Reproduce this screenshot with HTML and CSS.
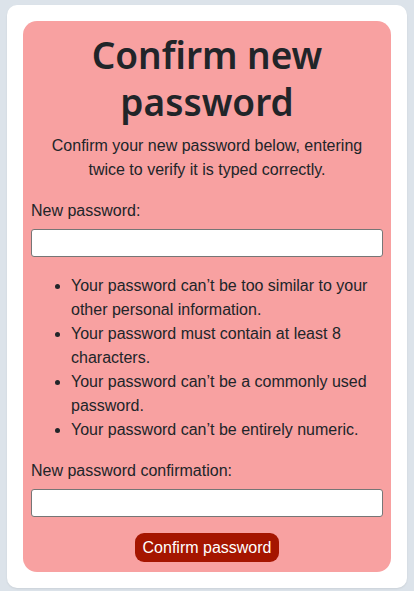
FILE: index.html
```html
<!DOCTYPE html>
<html lang="en">
<head>
<meta charset="utf-8">
<title>Confirm new password</title>
<link rel="stylesheet" href="styles.css">
</head>
<body>
<main class="card">
  <section class="panel">
    <h1 class="title">Confirm new password</h1>
    <p class="lead">Confirm your new password below, entering twice to verify it is typed correctly.</p>
    <form class="form">
      <div class="field">
        <label class="label" for="p1">New password:</label>
        <input class="input" id="p1" type="password">
      </div>
      <ul class="rules">
        <li>Your password can’t be too similar to your other personal information.</li>
        <li>Your password must contain at least 8 characters.</li>
        <li>Your password can’t be a commonly used password.</li>
        <li>Your password can’t be entirely numeric.</li>
      </ul>
      <div class="field">
        <label class="label" for="p2">New password confirmation:</label>
        <input class="input" id="p2" type="password">
      </div>
      <div class="actions">
        <button class="btn" type="submit">Confirm password</button>
      </div>
    </form>
  </section>
</main>
</body>
</html>
```

FILE: styles.css
```css
html, body {
  margin: 0;
  padding: 0;
}

body {
  background: #dce3ea;
  padding: 5px 7px;
  font-family: "Liberation Sans", Arial, sans-serif;
  font-size: 16px;
  line-height: 24px;
  color: #212529;
}

.card {
  background: #ffffff;
  border-radius: 10px;
  padding: 16px;
  box-shadow: 0 1px 2px rgba(0, 0, 0, 0.08);
}

.panel {
  background: #f8a1a1;
  border-radius: 14px;
  padding: 10px 8px 10px;
}

.title {
  margin: 0 0 9px;
  text-align: center;
  font-family: "Noto Sans", "Liberation Sans", sans-serif;
  font-size: 37px;
  line-height: 47px;
  font-weight: 600;
}

.lead {
  margin: 0 0 17px;
  padding: 0 8px;
  text-align: center;
}

.form {
  display: flex;
  flex-direction: column;
}

.field {
  display: flex;
  flex-direction: column;
  gap: 6px;
}

.label {
  display: block;
}

.input {
  box-sizing: border-box;
  width: 100%;
  height: 28px;
  margin: 0;
  border: 1px solid #767676;
  border-radius: 3px;
  background: #ffffff;
  font: inherit;
}

.rules {
  margin: 17px 0 17px;
  padding-left: 40px;
}

.actions {
  display: flex;
  justify-content: center;
  margin-top: 16px;
}

.btn {
  height: 29px;
  padding: 0 8px;
  border: none;
  border-radius: 9px;
  background: #a51500;
  color: #ffffff;
  font: inherit;
  line-height: 29px;
}
```
